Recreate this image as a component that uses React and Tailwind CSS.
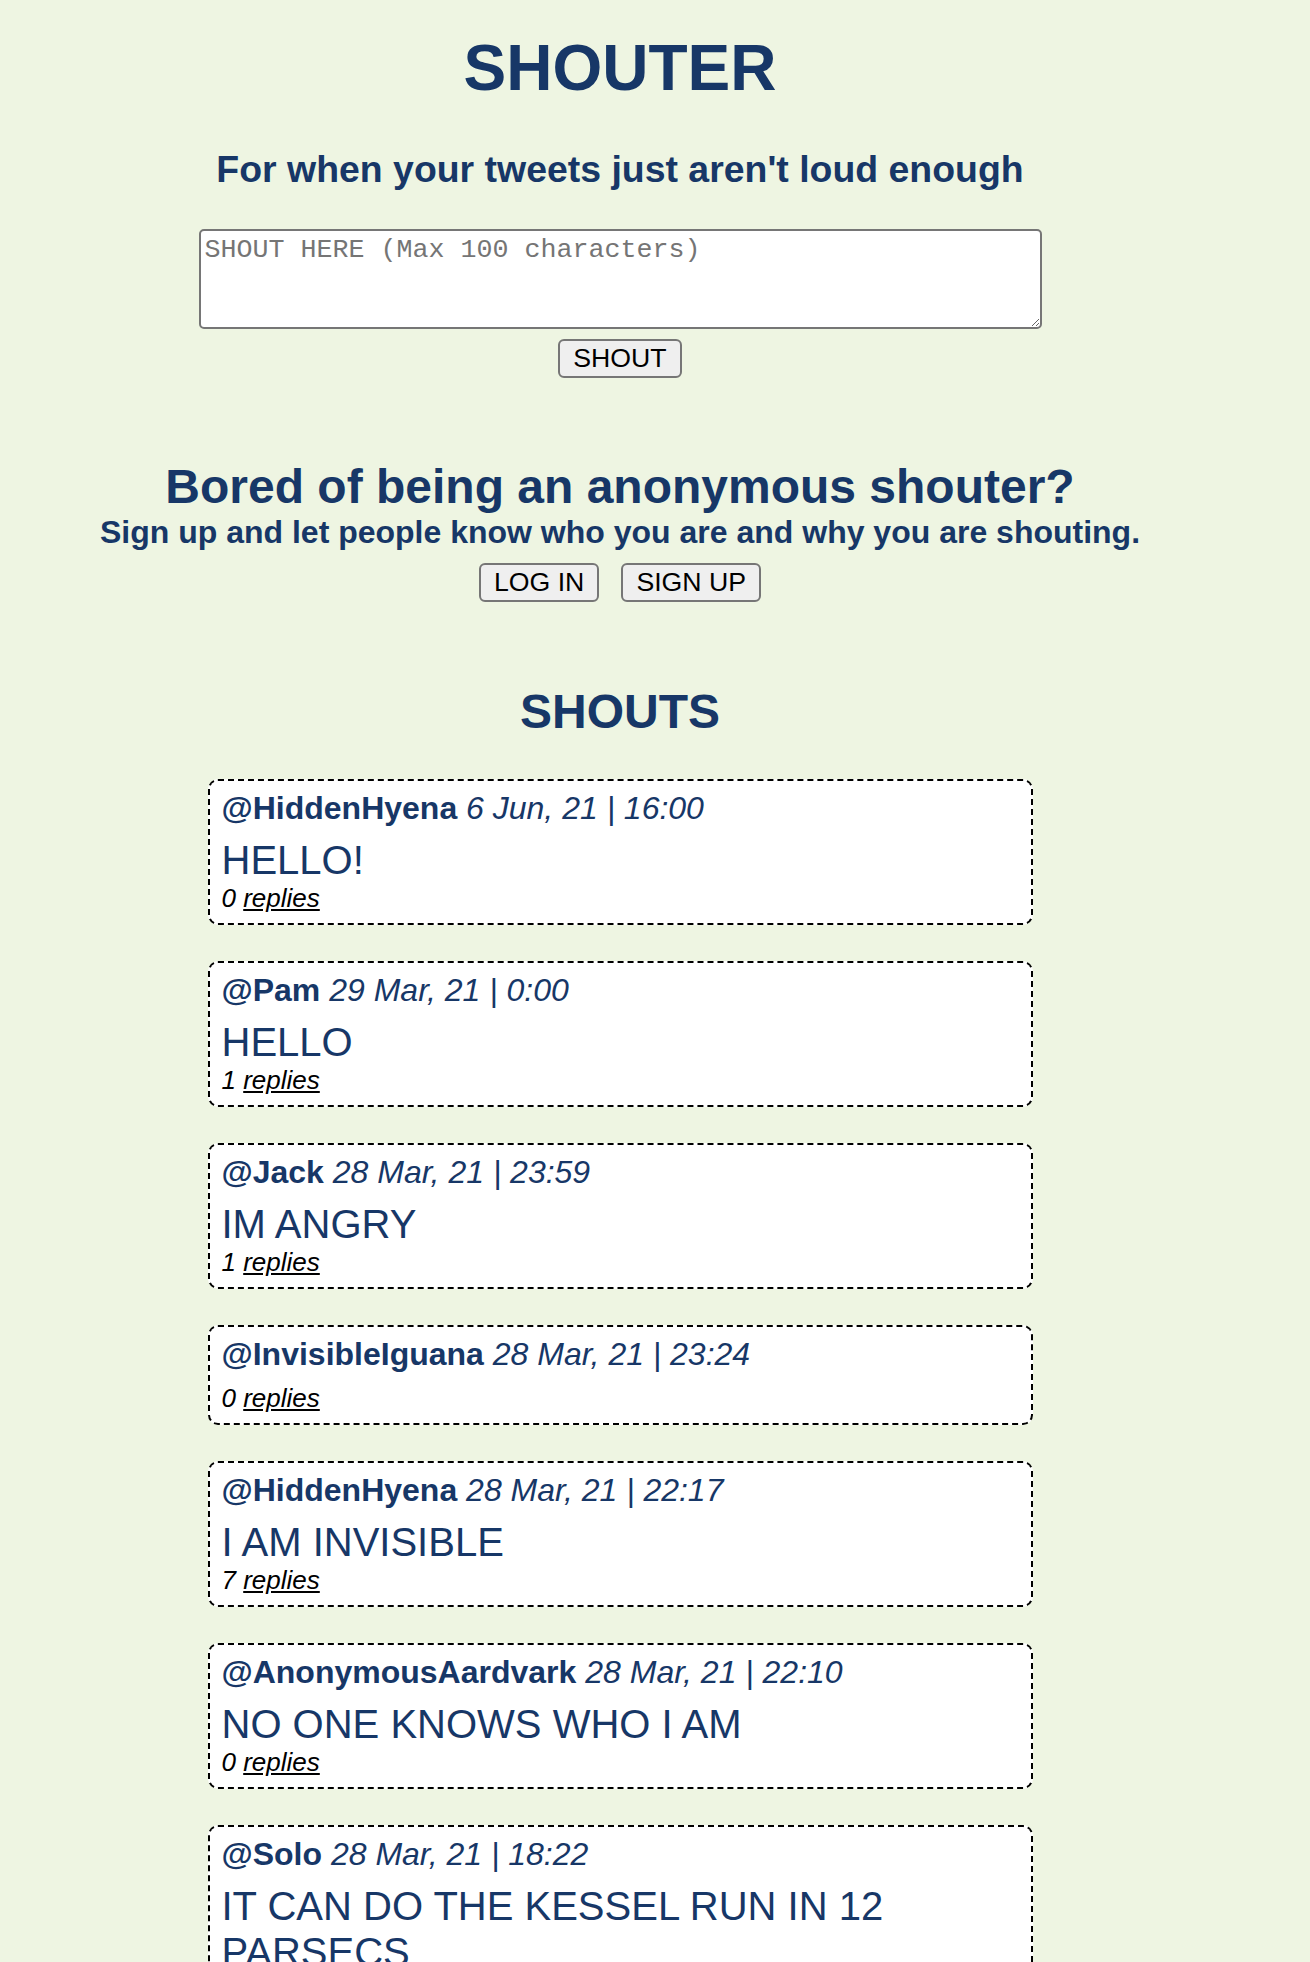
import React from "react";

const shouts = [
  { id: 1, user: "HiddenHyena", date: "6 Jun, 21 | 16:00", text: "HELLO!", replies: 0 },
  { id: 2, user: "Pam", date: "29 Mar, 21 | 0:00", text: "HELLO", replies: 1 },
  { id: 3, user: "Jack", date: "28 Mar, 21 | 23:59", text: "IM ANGRY", replies: 1 },
  { id: 4, user: "InvisibleIguana", date: "28 Mar, 21 | 23:24", text: "", replies: 0 },
  { id: 5, user: "HiddenHyena", date: "28 Mar, 21 | 22:17", text: "I AM INVISIBLE", replies: 7 },
  { id: 6, user: "AnonymousAardvark", date: "28 Mar, 21 | 22:10", text: "NO ONE KNOWS WHO I AM", replies: 0 },
  { id: 7, user: "Solo", date: "28 Mar, 21 | 18:22", text: "IT CAN DO THE KESSEL RUN IN 12 PARSECS", replies: 3 },
];

const btn =
  "px-[13px] py-[2px] border-2 border-[#767676] rounded-[6px] bg-[#efefef] text-black text-[26.67px] leading-[31px] font-['Liberation_Sans',Arial,sans-serif]";

function ShoutCard({ s }) {
  return (
    <div className="bg-white border-2 border-dashed border-black rounded-[10px] pt-[9px] pb-[10px] px-[12px]">
      <div className="text-[32px] leading-[37px]">
        <span className="font-bold">@{s.user}</span> <span className="italic">{s.date}</span>
      </div>
      <div className="mt-[10px] text-[40px] leading-[46px]">{s.text}</div>
      <div className="text-[26px] leading-[30px] italic text-black">
        {s.replies}{" "}
        <a href="#" className="underline">
          replies
        </a>
      </div>
    </div>
  );
}

export default function App() {
  return (
    <div className="min-h-screen bg-[#eef5e2] text-[#173767] font-['Liberation_Sans',Arial,sans-serif]">
      <div className="w-[1240px] flex flex-col items-center pt-[31px]">
        <h1 className="text-[64px] font-bold leading-[74px]">SHOUTER</h1>
        <h3 className="mt-[43px] text-[37.44px] font-bold leading-[43px]">
          For when your tweets just aren't loud enough
        </h3>

        <textarea
          placeholder="SHOUT HERE (Max 100 characters)"
          className="mt-[38px] w-[843px] h-[100px] bg-white border-2 border-[#767676] rounded-[5px] px-[4px] py-[4px] text-[26.67px] leading-[30px] text-black font-['Liberation_Mono','Courier_New',monospace] placeholder:text-[#757575]"
        />
        <button className={`mt-[10px] ${btn}`}>SHOUT</button>

        <h2 className="mt-[81px] text-[48px] font-bold leading-[55px]">Bored of being an anonymous shouter?</h2>
        <h4 className="text-[32px] font-bold leading-[37px]">
          Sign up and let people know who you are and why you are shouting.
        </h4>
        <div className="mt-[12px] flex gap-[22px]">
          <button className={btn}>LOG IN</button>
          <button className={btn}>SIGN UP</button>
        </div>

        <h2 className="mt-[82px] text-[48px] font-bold leading-[55px]">SHOUTS</h2>

        {/* Shout list */}
        <div className="mt-[40px] w-[825px] flex flex-col gap-[36px] pb-10">
          {shouts.map((s) => (
            <ShoutCard key={s.id} s={s} />
          ))}
        </div>
      </div>
    </div>
  );
}
